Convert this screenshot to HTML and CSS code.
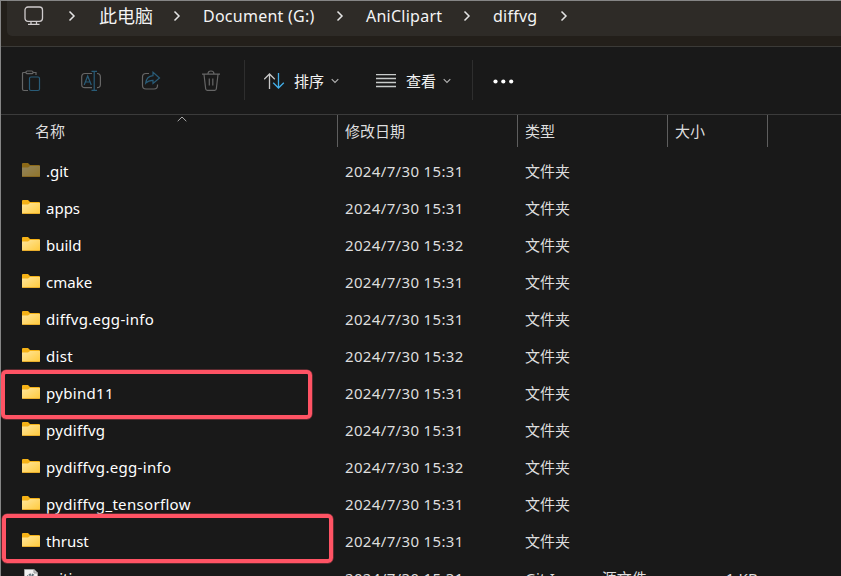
FILE: index.html
```html
<!DOCTYPE html>
<html lang="zh-CN">
<head>
<meta charset="utf-8">
<title>diffvg</title>
<link rel="stylesheet" href="styles.css">
</head>
<body>
<svg class="defs" width="0" height="0">
  <defs>
    <linearGradient id="gold" x1="0" y1="0" x2="1" y2="1"><stop offset="0" stop-color="#ffe69c"/><stop offset="1" stop-color="#ffca3c"/></linearGradient>
    <symbol id="folder" viewBox="0 0 18 14"><path d="M0 1Q0 0 1 0H6L8 2H17Q18 2 18 3V6H0Z" fill="#f5b216"/><path d="M0 4.5H6L8 3H18V13Q18 14 17 14H1Q0 14 0 13Z" fill="url(#gold)"/><path d="M.5 13.5H17.5" stroke="#e9ae2c"/></symbol>
    <symbol id="right" viewBox="0 0 8 12"><path d="M1.5 1.5L6 6L1.5 10.5" fill="none" stroke="#e4e4e4" stroke-width="1.5"/></symbol>
    <symbol id="down" viewBox="0 0 8 6"><path d="M.7 1.2L4 4.4L7.3 1.2" fill="none" stroke="#b4b4b4" stroke-width="1.1"/></symbol>
  </defs>
</svg>
<div class="window">
  <nav class="address">
    <div class="crumbs">
      <svg class="pc" viewBox="0 0 20 20"><rect x="1" y="1" width="17.5" height="14.3" rx="3"/><path d="M7 15.5V18M12.5 15.5V18M4 18.3H15.5"/></svg>
      <svg class="chev c1"><use href="#right"/></svg>
      <span class="crumb cjk k1">此电脑</span>
      <svg class="chev c2"><use href="#right"/></svg>
      <span class="crumb k2">Document (G:)</span>
      <svg class="chev c3"><use href="#right"/></svg>
      <span class="crumb k3">AniClipart</span>
      <svg class="chev c4"><use href="#right"/></svg>
      <span class="crumb k4">diffvg</span>
      <svg class="chev c5"><use href="#right"/></svg>
    </div>
  </nav>
  <div class="toolbar">
    <svg class="tool" viewBox="0 0 20 22"><path class="g" d="M5 2.5H2.5Q1.5 2.5 1.5 3.5V19Q1.5 20.5 3 20.5H7M12 2.5H15V5"/><rect class="g" x="5" y="1" width="7" height="2.7" rx="1.3"/><rect class="b" x="8.5" y="7" width="10" height="13.5" rx="1.5"/></svg>
    <svg class="tool" viewBox="0 0 20 22"><path class="g" d="M11 3.5H4Q.7 3.5 .7 7V14.5Q.7 17.7 4 17.7H11M16 3.5Q19.4 3.5 19.4 7V14.5Q19.4 17.7 16 17.7"/><path class="b" d="M3.2 15L6.7 6L10.3 15M4.5 12H9M10.5 1.3H16M10.5 20.3H16M13.2 1.3V20.3"/></svg>
    <svg class="tool" viewBox="0 0 20 22"><path class="g" d="M8 3.5H5Q1.5 3.5 1.5 7V15.5Q1.5 19 5 19H13Q16.5 19 16.5 15.5V14.5"/><path class="b" d="M12 2.3L18.5 8L12 13.5V10.3Q7.5 10.2 4.7 13.2Q5.5 6.3 12 5.7Z"/></svg>
    <svg class="tool" viewBox="0 0 20 22"><path class="g" d="M1 4.2H19M7 4Q7 1 10 1Q13 1 13 4M3 4.5L4.7 19Q4.9 20.3 6.2 20.3H13.8Q15.1 20.3 15.3 19L17 4.5M8.3 8.5V15.5M11.8 8.5V15.5"/></svg>
    <i class="sep"></i>
    <svg class="sort" viewBox="0 0 21 16"><path d="M5.5 16V1M.2 6.2L5.5 1L10.8 6.2" stroke="#c9c9c9"/><path d="M14.5 0V15M9.2 9.8L14.5 15L19.8 9.8" stroke="#42aee8"/></svg>
    <span class="label">排序</span>
    <svg class="drop"><use href="#down"/></svg>
    <svg class="lines" viewBox="0 0 20 14"><path d="M0 .5H20M0 4.5H20M0 8.5H20M0 12.5H20" stroke="#c8cbca" stroke-width="1.3"/></svg>
    <span class="label">查看</span>
    <svg class="drop"><use href="#down"/></svg>
    <i class="sep second"></i>
    <svg class="more" viewBox="0 0 21 5"><circle cx="2.5" cy="2.5" r="2.1"/><circle cx="10.3" cy="2.5" r="2.1"/><circle cx="18.2" cy="2.5" r="2.1"/></svg>
  </div>
  <div class="head grid">
    <span class="name">名称<svg class="up" viewBox="0 0 10 6"><path d="M.7 5.2L5 1L9.3 5.2"/></svg></span><span>修改日期</span><span>类型</span><span>大小</span>
  </div>
  <main>
    <div class="row grid"><span class="name"><svg class="folder dim"><use href="#folder"/></svg><b>.git</b></span><span class="date">2024/7/30 15:31</span><span>文件夹</span></div>
    <div class="row grid"><span class="name"><svg class="folder"><use href="#folder"/></svg><b>apps</b></span><span class="date">2024/7/30 15:31</span><span>文件夹</span></div>
    <div class="row grid"><span class="name"><svg class="folder"><use href="#folder"/></svg><b>build</b></span><span class="date">2024/7/30 15:32</span><span>文件夹</span></div>
    <div class="row grid"><span class="name"><svg class="folder"><use href="#folder"/></svg><b>cmake</b></span><span class="date">2024/7/30 15:31</span><span>文件夹</span></div>
    <div class="row grid"><span class="name"><svg class="folder"><use href="#folder"/></svg><b class="wide">diffvg.egg-info</b></span><span class="date">2024/7/30 15:31</span><span>文件夹</span></div>
    <div class="row grid"><span class="name"><svg class="folder"><use href="#folder"/></svg><b class="wide">dist</b></span><span class="date">2024/7/30 15:32</span><span>文件夹</span></div>
    <div class="row grid"><i class="mark first"></i><span class="name"><svg class="folder"><use href="#folder"/></svg><b class="wide">pybind11</b></span><span class="date">2024/7/30 15:31</span><span>文件夹</span></div>
    <div class="row grid"><span class="name"><svg class="folder"><use href="#folder"/></svg><b class="wide">pydiffvg</b></span><span class="date">2024/7/30 15:31</span><span>文件夹</span></div>
    <div class="row grid"><span class="name"><svg class="folder"><use href="#folder"/></svg><b class="wide">pydiffvg.egg-info</b></span><span class="date">2024/7/30 15:32</span><span>文件夹</span></div>
    <div class="row grid"><span class="name"><svg class="folder"><use href="#folder"/></svg><b class="wide">pydiffvg_tensorflow</b></span><span class="date">2024/7/30 15:31</span><span>文件夹</span></div>
    <div class="row grid"><i class="mark last"></i><span class="name"><svg class="folder"><use href="#folder"/></svg><b>thrust</b></span><span class="date">2024/7/30 15:31</span><span>文件夹</span></div>
    <div class="row grid"><span class="name"><svg class="file" viewBox="0 0 14 18"><path d="M.5 .5H10L13.5 4V17.5H.5Z" fill="#f1f1f1" stroke="#a5a5a5"/><path d="M10 .5V4H13.5" fill="#ccc" stroke="#999"/><circle cx="7" cy="9" r="3.5" fill="none" stroke="#607078" stroke-width="2.2" stroke-dasharray="2 .8"/><circle cx="7" cy="9" r="2.6" fill="#607078"/></svg><b>.gitignore</b></span><span class="date">2024/7/30 15:31</span><span class="kind">Git Ignore 源文件</span><span class="size">1 KB</span></div>
  </main>
</div>
</body>
</html>
```
FILE: styles.css
```css
* { box-sizing: border-box; }
body {
  margin: 0;
  height: 576px;
  overflow: hidden;
  background: #191919;
  color: #dedede;
  font: 15px/20px "Noto Sans", "Noto Sans CJK SC", sans-serif;
}
svg { display: block; flex: none; fill: none; }
.defs { position: absolute; }
.window { height: 576px; overflow: hidden; border-top: 1px solid #858585; border-left: 1px solid #858585; }

.address { height: 46px; padding-left: 6px; background: #231f1a; border-bottom: 1px solid #3b3a37; }
.crumbs { height: 35px; display: flex; align-items: flex-start; padding-left: 17px; background: #2e2b27; border-radius: 0 0 0 5px; }
.pc { width: 20px; height: 20px; margin-top: 5px; stroke: #d0cccd; stroke-width: 1.3; }
.chev { width: 8px; height: 12px; margin-top: 9px; }
.crumb { height: 20px; margin-top: 5px; color: #f4f4f4; font-size: 16px; letter-spacing: .25px; white-space: nowrap; }
.crumb.cjk { font-size: 18px; letter-spacing: 0; }
.c1 { margin-left: 24px; }
.k1 { width: 54px; margin-left: 23px; }
.c2 { margin-left: 20px; }
.k2 { width: 113px; margin-left: 22px; }
.c3 { margin-left: 20px; }
.k3 { width: 77px; margin-left: 22px; }
.c4 { margin-left: 20px; }
.k4 { width: 45px; margin-left: 22px; }
.c5 { margin-left: 22px; }

.toolbar { height: 68px; display: flex; align-items: center; padding-left: 20px; border-bottom: 1px solid #3b3b3b; }
.tool { width: 20px; height: 22px; margin: 1px 40px 0 0; stroke-width: 1.2; }
.tool:nth-child(4) { margin-right: 23px; }
.g { stroke: #666; }
.b { stroke: #295c78; }
.sep { width: 1px; height: 40px; margin-top: -1px; background: #2e2e2e; }
.sort { width: 21px; height: 16px; margin: 0 9px 0 19px; stroke-width: 1.3; }
.label { width: 30px; color: #f2f2f2; }
.drop { width: 8px; height: 6px; margin-left: 7px; }
.lines { width: 20px; height: 14px; margin: 0 10px 0 37px; }
.second { margin-left: 21px; }
.more { width: 21px; height: 5px; margin: 1px 0 0 20px; fill: #fff; }

.grid { display: grid; grid-template-columns: 336px 180px 150px 100px; align-items: center; }
.head { height: 32px; }
.head > span { display: flex; align-items: center; height: 32px; padding: 0 0 1px 7px; border-right: 1px solid #5e5e5e; }
.head > .name { padding-left: 34px; }
.grid > .name { position: relative; width: 337px; }
.head > span:nth-child(n+2) { width: 181px; padding-left: 8px; }
.head > span:nth-child(3) { width: 151px; }
.head > span:nth-child(4) { width: 101px; }
.up { position: absolute; left: 176px; top: 1px; width: 10px; height: 6px; stroke: #aaa; }

main { padding-top: 6px; }
.row { height: 37px; position: relative; }
.row > span { padding: 0 0 2px 8px; white-space: nowrap; }
.row > .name { display: flex; align-items: center; padding-left: 21px; color: #fff; }
.row b { font-weight: 400; margin-left: 6px; }
.row .wide { letter-spacing: .32px; }
.row > .date { letter-spacing: .35px; }
.row > .kind { letter-spacing: .15px; }
.row > .size { text-align: right; padding-right: 9px; letter-spacing: .2px; }
.folder { width: 18px; height: 14px; margin-top: -1px; }
.dim { opacity: .52; }
.file { width: 14px; height: 18px; margin: 0 2px 0 2px; }
.mark { position: absolute; z-index: 1; border: 4px solid #ff5364; border-radius: 5px; box-shadow: 0 0 0 .5px #9b3a44; }
.first { left: 0; top: -5px; width: 311px; height: 49px; }
.last { left: 1px; top: -9px; width: 331px; height: 49px; }
```
